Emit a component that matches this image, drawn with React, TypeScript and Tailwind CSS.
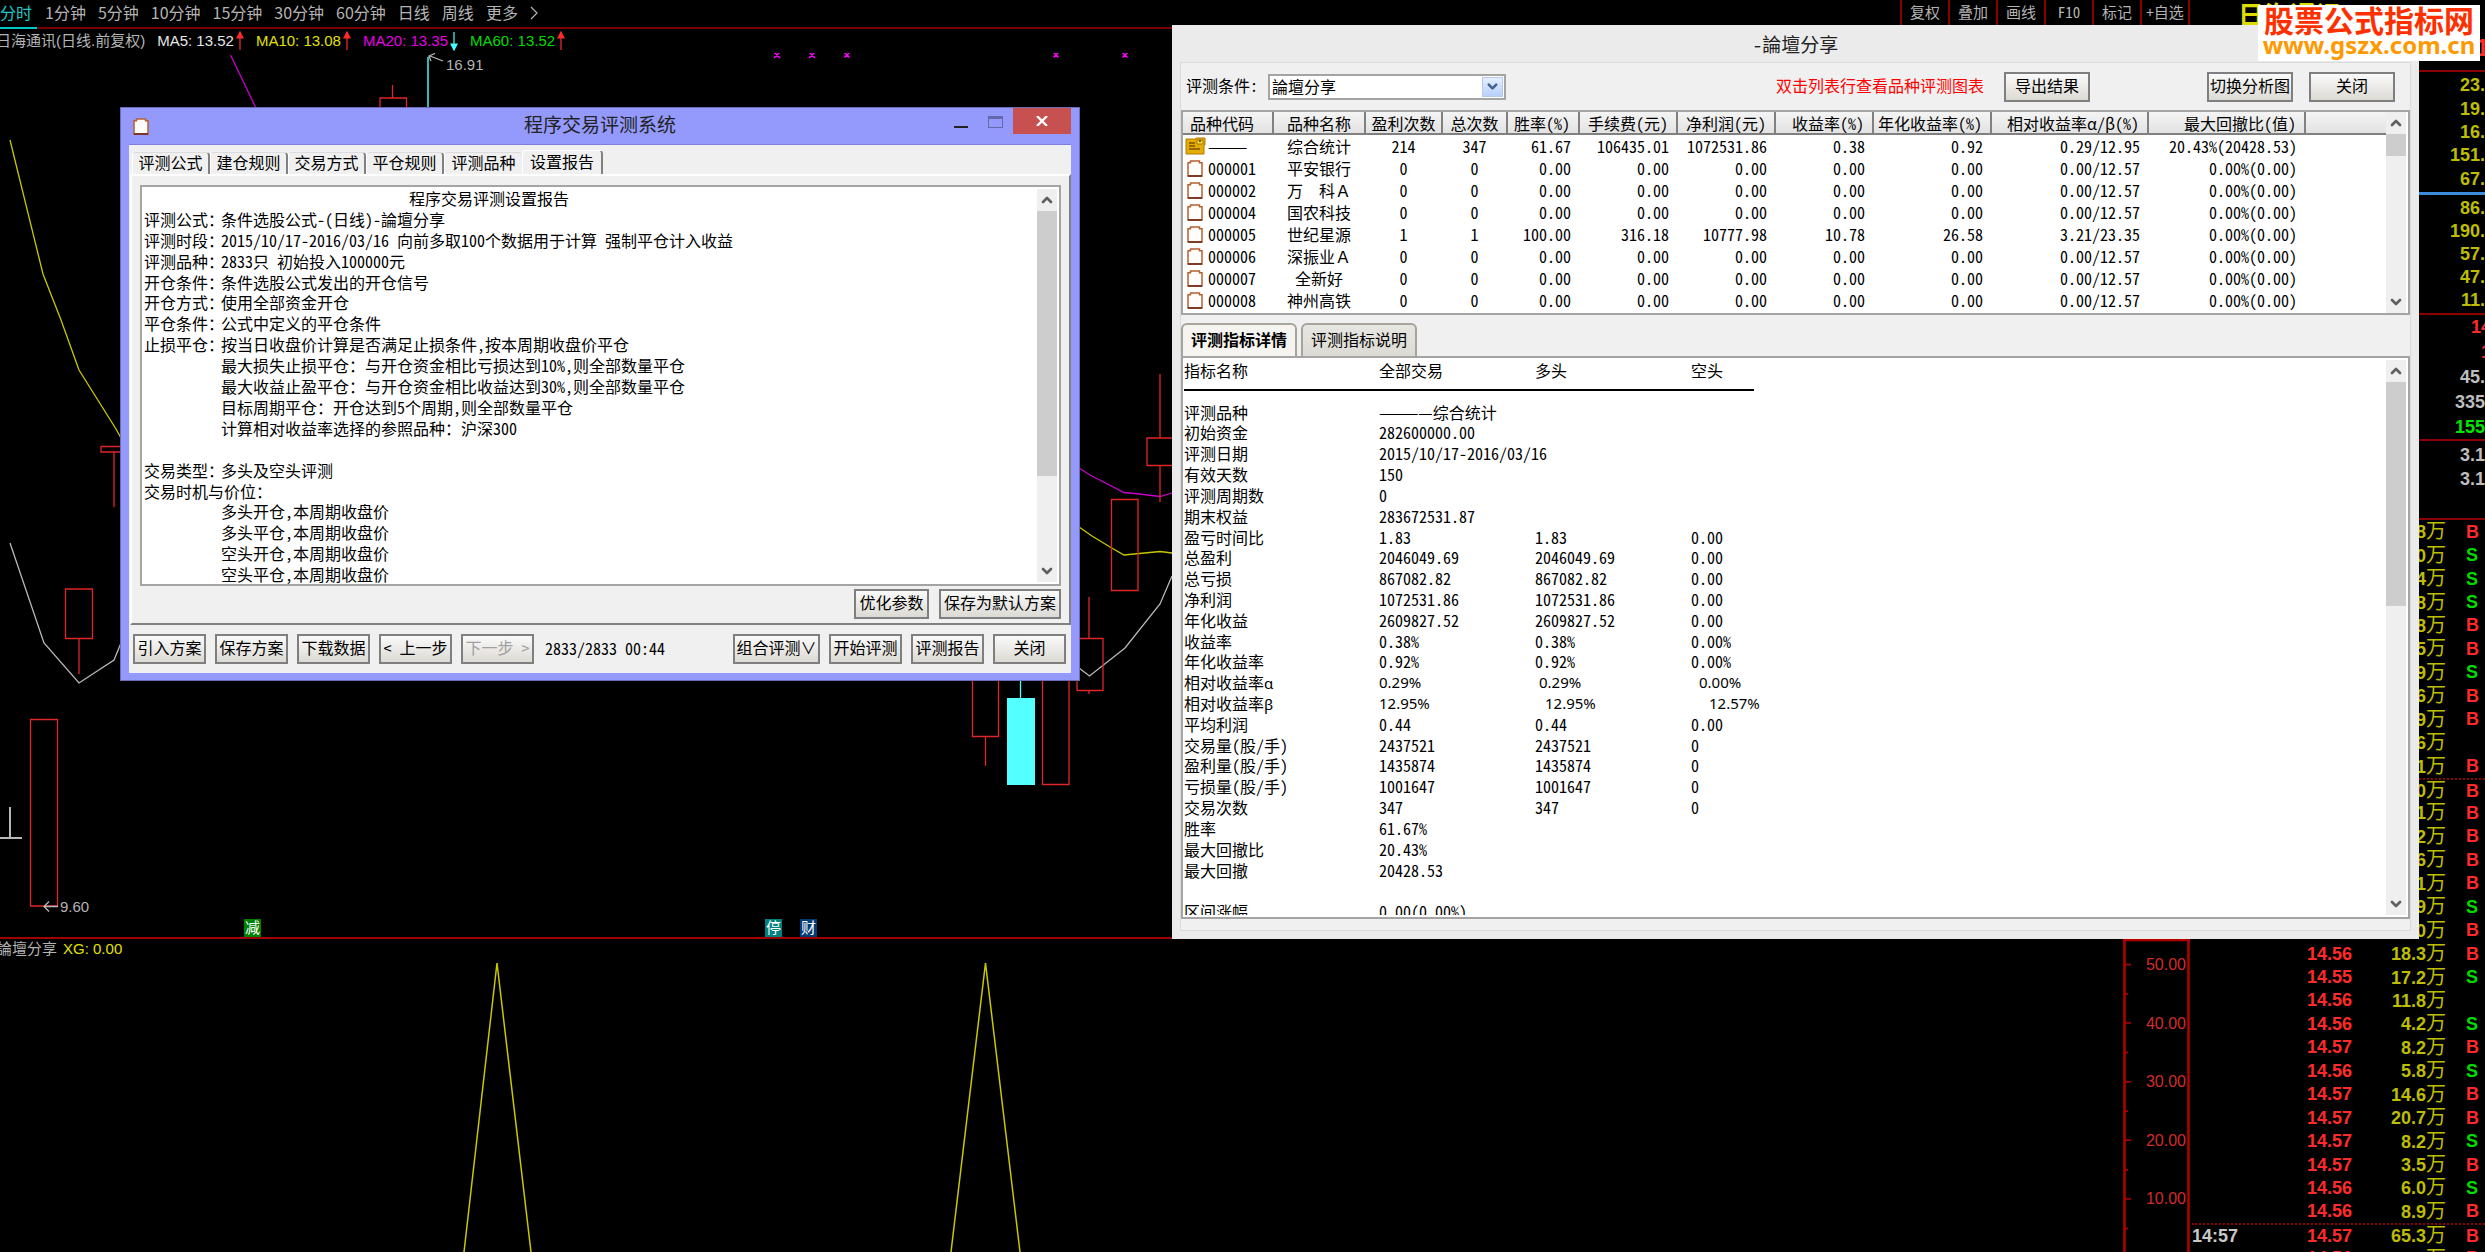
import React from "react";
import { ChevronDown, ChevronUp } from "lucide-react";

const CJK = "font-['Noto_Sans_CJK_SC',sans-serif] [font-feature-settings:'hwid']";
const LATIN = "font-['Liberation_Sans','Noto_Sans_CJK_SC',sans-serif]";

/* ---------- shared pieces ---------- */

function Scrollbar({ thumb }: { thumb: string }) {
  return (
    <div className="flex w-5 shrink-0 flex-col bg-[#efefef]">
      <button aria-label="向上滚动" className="flex h-[22px] shrink-0 items-center justify-center text-[#606060]">
        <ChevronUp size={16} strokeWidth={4} />
      </button>
      <div className="min-h-0 flex-1">
        <div className={`w-full bg-[#cdcdcd] ${thumb}`} />
      </div>
      <button aria-label="向下滚动" className="flex h-[22px] shrink-0 items-center justify-center text-[#606060]">
        <ChevronDown size={16} strokeWidth={4} />
      </button>
    </div>
  );
}

function Btn({ children, className = "", disabled = false }: { children: React.ReactNode; className?: string; disabled?: boolean }) {
  return (
    <button
      disabled={disabled}
      className={`flex h-[30px] shrink-0 items-center justify-center whitespace-nowrap border-2 border-[#7f7f7f] bg-linear-to-b from-[#fafafa] to-[#dcdad4] pb-1 text-base text-black disabled:text-[#a0a0a0] ${className}`}
    >
      {children}
    </button>
  );
}

function Clipboard({ className = "" }: { className?: string }) {
  return (
    <svg viewBox="0 0 16 17" className={className} aria-hidden="true">
      <path d="M1 2.800h2.500V1h9v1.800H15V16H1z" fill="#fffefc" stroke="#b5602f" strokeWidth="1.500" />
      <path d="M1 16h14" stroke="#6a2010" strokeWidth="1.500" />
    </svg>
  );
}

function Folder({ className = "" }: { className?: string }) {
  return (
    <svg viewBox="0 0 21 18" className={className} aria-hidden="true">
      <path d="M1 2h10V1h9v7h-1v9H1z" fill="#e3ac06" stroke="#b07c00" strokeWidth="1" />
      <path d="M4 6h6M4 9h6M4 12h11" stroke="#7d5400" strokeWidth="1.4" />
      <path d="M12 3h6v4h-6z" fill="#ffe04a" stroke="#a87400" strokeWidth="1" />
      <circle cx="15" cy="4" r="1.2" fill="#7d5400" />
    </svg>
  );
}

/* ---------- background: toolbar and charts ---------- */

const periods = ["1分钟", "5分钟", "10分钟", "15分钟", "30分钟", "60分钟", "日线", "周线", "更多"];
const tools = ["复权", "叠加", "画线", "F10", "标记", "+自选"];

function Toolbar() {
  return (
    <header className="flex h-[29px] shrink-0 items-stretch border-b-2 border-[#7a0000] font-['Noto_Sans_CJK_SC',sans-serif] text-base text-[#b4b4b4]">
      <nav className="flex gap-2 whitespace-nowrap leading-6">
        <a href="#" className="-mb-0.5 w-[37px] border-b-2 border-[#00c8c8] text-[#1ec8c8]">分时</a>
        <span className="flex gap-3">
          {periods.map((p) => (
            <a key={p} href="#">{p}</a>
          ))}
          <svg viewBox="0 0 8 14" className="mt-1.5 h-3.5 w-2" aria-hidden="true">
            <path d="M1 1l6 6-6 6" fill="none" stroke="#b4b4b4" strokeWidth="1.2" />
          </svg>
        </span>
      </nav>
      <div className="ml-auto flex border-l-2 border-[#8b0000] [font-feature-settings:'hwid']">
        {tools.map((t) => (
          <button key={t} className="w-12 whitespace-nowrap border-r-2 border-[#8b0000] pb-1 text-[15px] leading-5">{t}</button>
        ))}
      </div>
    </header>
  );
}

function Arrow({ up }: { up: boolean }) {
  return (
    <svg viewBox="0 0 8 20" className="h-5 w-2" aria-hidden="true">
      {up ? (
        <path d="M4 1v18M1 7l3-6 3 6z" stroke="#ff2a2a" fill="#ff2a2a" strokeWidth="1.2" />
      ) : (
        <path d="M4 19V1M1 13l3 6 3-6z" stroke="#4ff" fill="#4ff" strokeWidth="1.2" />
      )}
    </svg>
  );
}

const averages = [
  { text: "MA5: 13.52", color: "text-[#e6e6e6]", up: true },
  { text: "MA10: 13.08", color: "text-[#e0e000]", up: true },
  { text: "MA20: 13.35", color: "text-[#e600e6]", up: false },
  { text: "MA60: 13.52", color: "text-[#00dc00]", up: true },
];

function CandleChart() {
  return (
    <section className={`relative flex min-h-0 flex-1 flex-col ${LATIN} text-[15px]`}>
      <div className="flex h-6 shrink-0 items-center gap-3 whitespace-nowrap">
        <span className="-ml-1 leading-5 text-[#b4b4b4]">日海通讯(日线.前复权)</span>
        {averages.map((a) => (
          <span key={a.text} className={`flex items-center gap-0.5 ${a.color}`}>
            {a.text}
            <Arrow up={a.up} />
          </span>
        ))}
      </div>
      <svg viewBox="0 53 1180 884" preserveAspectRatio="xMinYMin meet" className="min-h-0 w-[1180px] flex-1" fill="none" strokeWidth="1.3">
        <path d="M230.5 55L255.5 107M1079 468L1090 475 1124 492.5 1135 493.5 1160 496.5 1172 493" stroke="#c800c8" />
        <path d="M10 140L43 274 61 320 79 370 116 429 121 438M1079 527L1092 536 1110 547 1124 555 1160 551.5 1172 553" stroke="#c8c800" />
        <path d="M10 543L44 643 79 683 114 660 121 643M1079 668L1089.500 676 1125 648 1160 604 1172 576" stroke="#b8b8b8" />
        <path d="M428 57V107" stroke="#3cb4b4" strokeWidth="2" />
        <path d="M1020.500 680V698" stroke="#4ff" />
        <rect x="1007" y="698" width="28" height="87" fill="#54ffff" />
        <g stroke="#e02626">
          <path d="M392.500 85V98M380 107V98H406.500V107" />
          <path d="M120 446.500H101V452H120M114 452V507" />
          <path d="M65.500 589H92.500V638.500H65.500zM79 638.500V674" />
          <path d="M30.500 719.500H57.500V906H30.500z" />
          <path d="M1160 374V438M1172 438H1147V465.500H1172M1160 465.500V502" />
          <path d="M1111.500 499.500H1138V590.500H1111.500z" />
          <path d="M1089 597V638.500M1077 638.500H1103V690.500H1077zM1089 690.500V694" />
          <path d="M972.500 680V736.500H998.500V680M985.500 736.500V766" />
          <path d="M1042.500 680V784.500H1069V680" />
        </g>
        <g stroke="#b8b8b8">
          <path d="M443 61L430 56M435 53.500L429 56 431 61" />
          <path d="M58 906.500H44M49 901.500L44 906.500 49 911.500" />
          <path d="M10 807V837M0 838H22" strokeWidth="2" />
        </g>
        <g stroke="#f0f" strokeWidth="1.500">
          <path d="M774 52l6 6m0-6l-6 6M809 52l6 6m0-6l-6 6M844.500 52.500l5 5m0-5l-5 5M1053.500 52.500l5 5m0-5l-5 5M1122.500 52.500l5 5m0-5l-5 5" />
        </g>
        <text x="446" y="70" fill="#b4b4b4" fontSize="15">16.91</text>
        <text x="60" y="912" fill="#b4b4b4" fontSize="15">9.60</text>
      </svg>
      <span className="absolute bottom-0 left-[244px] h-[18px] w-[17px] bg-[#008000] text-center leading-[18px] text-white">减</span>
      <span className="absolute bottom-0 left-[765px] h-[18px] w-[17px] bg-[#008080] text-center leading-[18px] text-white">停</span>
      <span className="absolute bottom-0 left-[800px] h-[18px] w-[17px] bg-[#003c78] text-center leading-[18px] text-white">财</span>
    </section>
  );
}

const axisTicks = [50, 40, 30, 20, 10];

function IndicatorPane() {
  return (
    <section className={`flex h-[315px] shrink-0 border-t-2 border-[#a00000] text-[15px] ${LATIN}`}>
      <div className="flex min-w-0 flex-1 flex-col">
        <div className="flex h-[21px] items-center gap-1.5 whitespace-nowrap">
          <span className="-ml-[3px] text-[#b4b4b4]">論壇分享</span>
          <span className="text-[#e0e000]">XG: 0.00</span>
        </div>
        <svg viewBox="0 960 1180 292" preserveAspectRatio="xMinYMin meet" className="h-[292px] w-[1180px]" fill="none" stroke="#c8c800" strokeWidth="1.500">
          <path d="M464 1252L497 963 531 1252M951 1252L985.500 963 1020 1252" />
        </svg>
      </div>
      <svg viewBox="0 0 67 313" className="h-[313px] w-[67px] shrink-0" fontSize="16">
        <path d="M1.500 313V0M65.500 313V1M0 1H67" fill="none" stroke="#b40000" strokeWidth="2.500" />
        {axisTicks.map((v, i) => (
          <g key={v}>
            <path d={`M2 ${25.5 + i * 58.6}h6M2 ${55 + i * 58.6}h3`} stroke="#b40000" strokeWidth="1.500" />
            <text x="63" y={31 + i * 58.6} textAnchor="end" fill="#d02c2c">{v}.00</text>
          </g>
        ))}
      </svg>
    </section>
  );
}

/* ---------- background: quote column ---------- */

type Trade = { time?: string; price: string; vol: string; side: string };

const hiddenTrades: [string, string][] = [
  ["8.8", "B"], ["6.0", "S"], ["5.4", "S"], ["9.8", "S"], ["7.8", "B"], ["4.5", "B"], ["3.9", "S"], ["8.6", "B"],
  ["2.9", "B"], ["6.6", ""], ["5.1", "B"], ["7.0", "B"], ["4.1", "B"], ["9.2", "B"], ["3.6", "B"], ["8.1", "B"],
  ["5.9", "S"], ["6.0", "B"],
];

const trades: Trade[] = [
  ...hiddenTrades.map(([vol, side]) => ({ price: "14.56", vol, side })),
  { price: "14.56", vol: "18.3", side: "B" },
  { price: "14.55", vol: "17.2", side: "S" },
  { price: "14.56", vol: "11.8", side: "" },
  { price: "14.56", vol: "4.2", side: "S" },
  { price: "14.57", vol: "8.2", side: "B" },
  { price: "14.56", vol: "5.8", side: "S" },
  { price: "14.57", vol: "14.6", side: "B" },
  { price: "14.57", vol: "20.7", side: "B" },
  { price: "14.57", vol: "8.2", side: "S" },
  { price: "14.57", vol: "3.5", side: "B" },
  { price: "14.56", vol: "6.0", side: "S" },
  { price: "14.56", vol: "8.9", side: "B" },
  { time: "14:57", price: "14.57", vol: "65.3", side: "B" },
  { price: "14.56", vol: "7.6", side: "B" },
];

function Values({ items, className }: { items: string[]; className: string }) {
  return (
    <ul className={`flex flex-col justify-evenly text-right ${className}`}>
      {items.map((v, i) => (
        <li key={i}>{v}</li>
      ))}
    </ul>
  );
}

function QuotePanel() {
  return (
    <aside className={`flex w-[295px] shrink-0 flex-col overflow-hidden text-lg font-bold leading-5 ${LATIN}`}>
      <div className="h-[72px] shrink-0 border-b-2 border-[#8b0000] pl-12 text-[26px] leading-8 text-[#dcdc00]">
        日海通讯
        <div className="-mr-1 text-right text-2xl leading-8 text-[#ff2a2a]">0.1</div>
      </div>
      <Values items={["23.", "19.", "16.", "151.", "67."]} className="h-[120px] shrink-0 text-[#bebe00]" />
      <Values items={["86.", "190.", "57.", "47.", "11."]} className="h-[123px] shrink-0 border-b-2 border-t-3 border-b-[#8b0000] border-t-[#3c8cdc] text-[#bebe00]" />
      <div className="h-[126px] shrink-0 border-b-2 border-[#8b0000] text-right text-[#bebebe]">
        <div className="-mr-1.5 leading-[25px] text-[#ff2a2a]">14</div>
        <div className="-mr-1.5 leading-[25px] text-[#ff2a2a]">1</div>
        <div className="leading-[25px]">45.</div>
        <div className="leading-[25px]">335</div>
        <div className="leading-6 text-[#00e600]">155</div>
      </div>
      <div className="h-[79px] shrink-0 border-b-2 border-[#8b0000] pt-0.5 text-right text-[#bebebe]">
        <div className="leading-6">3.1</div>
        <div className="leading-6">3.1</div>
      </div>
      <ul className="grid h-[750px] shrink-0 grid-rows-32 pl-0.5">
        {trades.map((t, i) => (
          <li
            key={i}
            className={`grid grid-cols-[48px_112px_94px_1fr] items-center border-[#8b0000] leading-5 ${t.time || i === 11 ? "border-t-2 border-dotted" : ""}`}
          >
            <span className="text-[#c8c8c8]">{t.time}</span>
            <span className="text-right text-[#ff2a2a]">{t.price}</span>
            <span className="text-right text-[#bebe00]">{t.vol}<span className="text-xl font-normal leading-5">万</span></span>
            <span className={t.side === "S" ? "pl-5 text-[#00dc00]" : "pl-5 text-[#ff2a2a]"}>{t.side}</span>
          </li>
        ))}
      </ul>
    </aside>
  );
}

/* ---------- evaluation setup window ---------- */

const setupTabs = ["评测公式", "建仓规则", "交易方式", "平仓规则", "评测品种"];

const reportLines: [string, string][] = [
  ["评测公式：", "条件选股公式-(日线)-論壇分享"],
  ["评测时段：", "2015/10/17-2016/03/16 向前多取100个数据用于计算 强制平仓计入收益"],
  ["评测品种：", "2833只 初始投入100000元"],
  ["开仓条件：", "条件选股公式发出的开仓信号"],
  ["开仓方式：", "使用全部资金开仓"],
  ["平仓条件：", "公式中定义的平仓条件"],
  ["止损平仓：", "按当日收盘价计算是否满足止损条件,按本周期收盘价平仓"],
  ["", "最大损失止损平仓：与开仓资金相比亏损达到10%,则全部数量平仓"],
  ["", "最大收益止盈平仓：与开仓资金相比收益达到30%,则全部数量平仓"],
  ["", "目标周期平仓：开仓达到5个周期,则全部数量平仓"],
  ["", "计算相对收益率选择的参照品种：沪深300"],
  ["", ""],
  ["交易类型：", "多头及空头评测"],
  ["交易时机与价位：", ""],
  ["", "多头开仓,本周期收盘价"],
  ["", "多头平仓,本周期收盘价"],
  ["", "空头开仓,本周期收盘价"],
  ["", "空头平仓,本周期收盘价"],
];

function SetupWindow() {
  return (
    <div className={`absolute left-[120px] top-[107px] flex w-[960px] flex-col border border-[#6c6cb4] bg-[#9499fc] px-2 pb-[7px] text-base text-black ${CJK}`}>
      <div className="relative flex h-9 items-center justify-center">
        <Clipboard className="absolute left-1 top-2.5 h-[17px] w-4" />
        <h1 className="pb-1 text-[19px] leading-6 text-[#222]">程序交易评测系统</h1>
        <div className="absolute right-0 top-0 flex">
          <button aria-label="最小化" className="flex h-5 w-8 items-end justify-center">
            <span className="h-0.5 w-3.5 bg-[#222]" />
          </button>
          <button aria-label="最大化" className="flex h-5 w-9 items-end justify-center">
            <span className="h-3 w-[15px] border border-t-3 border-[#6468a8]" />
          </button>
          <button aria-label="关闭窗口" className="flex h-[26px] w-[58px] items-center justify-center bg-[#c75050]">
            <svg viewBox="0 0 12 10" className="h-2.5 w-3" aria-hidden="true">
              <path d="M1 0l10 10M11 0L1 10" stroke="#fff" strokeWidth="2.4" />
            </svg>
          </button>
        </div>
      </div>

      <div className="border-t border-[#7c80dc] bg-[#f0f0f0] pl-px">
        <div className="flex h-[29px] items-end pl-0.5">
          {setupTabs.map((t, i) => (
            <button
              key={t}
              className={`h-[22px] w-[78px] whitespace-nowrap rounded-t border-l border-t border-l-white border-t-[#dcdcdc] pb-1 leading-4 ${i < 4 ? "border-r-2 border-r-[#808080]" : ""}`}
            >
              {t}
            </button>
          ))}
          <button className="h-6 w-[81px] whitespace-nowrap rounded-t border-l border-r-2 border-t border-l-white border-r-[#808080] border-t-white pb-1 leading-4">设置报告</button>
        </div>
        <div className="border-b-2 border-l-2 border-r-2 border-t-2 border-b-[#808080] border-l-white border-r-[#808080] border-t-white pb-1 pl-2 pr-2 pt-[9px]">
          <div className="flex h-[401px] border-2 border-[#a4a4a4] bg-white pb-0.5 pr-0.5 pt-0.5">
            <div className="grid h-[397px] min-w-0 flex-1 grid-rows-19 whitespace-nowrap pl-0.5 leading-[18px]">
              <p className="pl-[265px]">程序交易评测设置报告</p>
              {reportLines.map(([label, text], i) => (
                <p key={i} className="flex">
                  <span className="w-[77px] shrink-0">{label}</span>
                  <span>{text}</span>
                </p>
              ))}
            </div>
            <Scrollbar thumb="h-[265px]" />
          </div>
          <div className="mt-[3px] flex justify-end gap-2.5">
            <Btn className="w-[75px]">优化参数</Btn>
            <Btn className="w-[122px]">保存为默认方案</Btn>
          </div>
        </div>
        <div className="flex items-center gap-[9px] py-[9px] pl-[3px] pr-[5px]">
          <Btn className="w-[73px]">引入方案</Btn>
          <Btn className="w-[73px]">保存方案</Btn>
          <Btn className="w-[73px]">下载数据</Btn>
          <Btn className="w-[73px]">&lt; 上一步</Btn>
          <Btn className="w-[73px]" disabled>下一步 &gt;</Btn>
          <span className="ml-0.5 mr-auto whitespace-nowrap pb-0.5">2833/2833 00:44</span>
          <Btn className="w-[87px]">组合评测∨</Btn>
          <Btn className="w-[73px]">开始评测</Btn>
          <Btn className="w-[73px]">评测报告</Btn>
          <Btn className="w-[73px]">关闭</Btn>
        </div>
      </div>
    </div>
  );
}

/* ---------- evaluation result window ---------- */

const listHead = ["品种代码", "品种名称", "盈利次数", "总次数", "胜率(%)", "手续费(元)", "净利润(元)", "收益率(%)", "年化收益率(%)", "相对收益率α/β(%)", "最大回撤比(值)"];

const emptyRow = ["0", "0", "0.00", "0.00", "0.00", "0.00", "0.00", "0.00/12.57", "0.00%(0.00)"];

const listRows: string[][] = [
  ["———", "综合统计", "214", "347", "61.67", "106435.01", "1072531.86", "0.38", "0.92", "0.29/12.95", "20.43%(20428.53)"],
  ["000001", "平安银行", ...emptyRow],
  ["000002", "万　科Ａ", ...emptyRow],
  ["000004", "国农科技", ...emptyRow],
  ["000005", "世纪星源", "1", "1", "100.00", "316.18", "10777.98", "10.78", "26.58", "3.21/23.35", "0.00%(0.00)"],
  ["000006", "深振业Ａ", ...emptyRow],
  ["000007", "全新好", ...emptyRow],
  ["000008", "神州高铁", ...emptyRow],
];

function alignOf(col: number) {
  if (col === 0) return "text-left";
  if (col === 1) return "text-center [font-feature-settings:normal]";
  return col < 4 ? "text-center" : "pr-2 text-right";
}

function ResultList() {
  return (
    <div className="flex h-[205px] border-2 border-[#a4a4a4] bg-white pr-0.5">
      <div className="min-w-0 flex-1">
        <table className="w-full table-fixed border-collapse whitespace-nowrap">
          <colgroup>
            <col className="w-[90px]" />
            <col className="w-[92px]" />
            <col className="w-[77px]" />
            <col className="w-[65px]" />
            <col className="w-[72px]" />
            <col className="w-[98px]" />
            <col className="w-[98px]" />
            <col className="w-[98px]" />
            <col className="w-[118px]" />
            <col className="w-[157px]" />
            <col className="w-[157px]" />
            <col />
          </colgroup>
          <thead>
            <tr className="h-[22px] bg-linear-to-b from-[#f4f4f4] to-[#e2e2e2]">
              {listHead.map((h, i) => (
                <th
                  key={h}
                  className={`overflow-hidden border-b-2 border-r-2 border-[#808080] p-0 font-normal leading-5 ${i === 0 ? "pl-[7px]" : ""} ${alignOf(i)}`}
                >
                  {h}
                </th>
              ))}
              <td className="border-b-2 border-[#808080] p-0" />
            </tr>
          </thead>
          <tbody>
            {listRows.map((row, r) => (
              <tr key={row[0]} className="h-[22px]">
                {row.map((cell, i) => (
                  <td key={i} className={`p-0 leading-[22px] ${alignOf(i)}`}>
                    {i === 0 ? (
                      <span className="flex h-[22px] items-center">
                        <span className="flex w-[25px] shrink-0 items-center pl-0.5">
                          {r === 0 ? <Folder className="h-[18px] w-[21px]" /> : <Clipboard className="ml-0.5 h-[17px] w-4" />}
                        </span>
                        {cell}
                      </span>
                    ) : (
                      cell
                    )}
                  </td>
                ))}
              </tr>
            ))}
          </tbody>
        </table>
      </div>
      <Scrollbar thumb="h-[22px]" />
    </div>
  );
}

const details: string[][] = [
  ["评测品种", "————综合统计"],
  ["初始资金", "282600000.00"],
  ["评测日期", "2015/10/17-2016/03/16"],
  ["有效天数", "150"],
  ["评测周期数", "0"],
  ["期末权益", "283672531.87"],
  ["盈亏时间比", "1.83", "1.83", "0.00"],
  ["总盈利", "2046049.69", "2046049.69", "0.00"],
  ["总亏损", "867082.82", "867082.82", "0.00"],
  ["净利润", "1072531.86", "1072531.86", "0.00"],
  ["年化收益", "2609827.52", "2609827.52", "0.00"],
  ["收益率", "0.38%", "0.38%", "0.00%"],
  ["年化收益率", "0.92%", "0.92%", "0.00%"],
  ["相对收益率α", "0.29%", "0.29%", "0.00%"],
  ["相对收益率β", "12.95%", "12.95%", "12.57%"],
  ["平均利润", "0.44", "0.44", "0.00"],
  ["交易量(股/手)", "2437521", "2437521", "0"],
  ["盈利量(股/手)", "1435874", "1435874", "0"],
  ["亏损量(股/手)", "1001647", "1001647", "0"],
  ["交易次数", "347", "347", "0"],
  ["胜率", "61.67%"],
  ["最大回撤比", "20.43%"],
  ["最大回撤", "20428.53"],
  ["", ""],
  ["区间涨幅", "0.00(0.00%)"],
];

function DetailPanel() {
  return (
    <div className="flex h-[563px] border-2 border-[#a4a4a4] bg-white pb-0.5 pr-0.5 pt-0.5">
      <div className="min-w-0 flex-1 overflow-hidden whitespace-nowrap pl-px leading-5">
        <div className="grid h-[562px] grid-cols-[195px_156px_156px_1fr] grid-rows-27">
          <span>指标名称</span>
          <span>全部交易</span>
          <span>多头</span>
          <span>空头</span>
          <span className="col-span-4 mt-2 h-0.5 w-[570px] bg-black" />
          {details.map((row, r) => {
            const greek = r === 13 || r === 14;
            const shift = r === 13 ? ["", "", "pl-1", "pl-2"] : ["", "", "pl-2.5", "pl-[18px]"];
            return [0, 1, 2, 3].map((i) => (
              <span
                key={`${r}-${i}`}
                className={greek && i > 0 ? `font-['Noto_Sans',sans-serif] text-[15px] ${shift[i]}` : ""}
              >
                {greek && i === 0 ? (
                  <>
                    {row[0].slice(0, 5)}
                    <span className="font-['Noto_Sans',sans-serif] text-[15px]">{row[0].slice(5)}</span>
                  </>
                ) : (
                  row[i]
                )}
              </span>
            ));
          })}
        </div>
      </div>
      <Scrollbar thumb="h-56" />
    </div>
  );
}

function ResultWindow() {
  return (
    <div className={`absolute left-[1172px] right-[66px] top-[25px] flex flex-col bg-[#ebebeb] px-2 pb-2 text-base text-black ${CJK}`}>
      <h1 className="flex h-[37px] items-center justify-center text-[19px] leading-6 text-[#222]">-論壇分享</h1>
      <div className="border border-[#dadada] bg-[#f0f0f0] pb-[11px]">
        <div className="flex h-[47px] items-center pl-[5px] pr-[15px]">
          <label htmlFor="condition" className="pb-1">评测条件:</label>
          <div className="relative ml-2.5">
            <select
              id="condition"
              defaultValue="a"
              className="h-[26px] w-[238px] appearance-none border-2 border-[#a4a4a4] bg-white pb-0.5 pl-0.5 leading-5"
            >
              <option value="a">論壇分享</option>
            </select>
            <span className="pointer-events-none absolute right-[3px] top-[3px] flex h-5 w-[21px] items-center justify-center border border-[#b4c8f0] bg-linear-to-b from-[#e4eefe] to-[#b8d0fa] text-[#44608c]">
              <ChevronDown size={15} strokeWidth={4} />
            </span>
          </div>
          <span className="ml-auto mr-5 whitespace-nowrap pb-1 text-[#f00]">双击列表行查看品种评测图表</span>
          <Btn className="mr-[117px] w-[86px]">导出结果</Btn>
          <Btn className="mr-4 w-[86px]">切换分析图</Btn>
          <Btn className="w-[86px]">关闭</Btn>
        </div>
        <ResultList />
        <div className="mt-2 flex h-[33px] gap-1" role="tablist">
          <button role="tab" aria-selected="true" className="w-[116px] rounded-t-md border-l-2 border-r-2 border-t-2 border-[#a8a49c] bg-[#f6f4f0] pb-1 font-bold">评测指标详情</button>
          <button role="tab" aria-selected="false" className="w-[116px] rounded-t-md border-l-2 border-r-2 border-t-2 border-[#a8a49c] bg-linear-to-b from-[#e8e6e2] to-[#dcdad4] pb-1">评测指标说明</button>
        </div>
        <DetailPanel />
      </div>
    </div>
  );
}

function Watermark() {
  return (
    <a href="#" className="absolute right-[5px] top-[5px] flex h-14 w-[222px] flex-col items-center justify-center whitespace-nowrap bg-white pb-1 font-bold">
      <span className="font-['Noto_Sans_CJK_SC',sans-serif] text-[30px] leading-7 text-[#ff3000]">股票公式指标网</span>
      <span className="font-['Noto_Sans',sans-serif] text-2xl leading-6 text-[#ff9900]">www.gszx.com.cn</span>
    </a>
  );
}

export default function App() {
  return (
    <div className="relative flex h-screen overflow-hidden bg-black">
      <main className="flex min-w-0 flex-1 flex-col overflow-hidden">
        <Toolbar />
        <CandleChart />
        <IndicatorPane />
      </main>
      <QuotePanel />
      <SetupWindow />
      <ResultWindow />
      <Watermark />
    </div>
  );
}
